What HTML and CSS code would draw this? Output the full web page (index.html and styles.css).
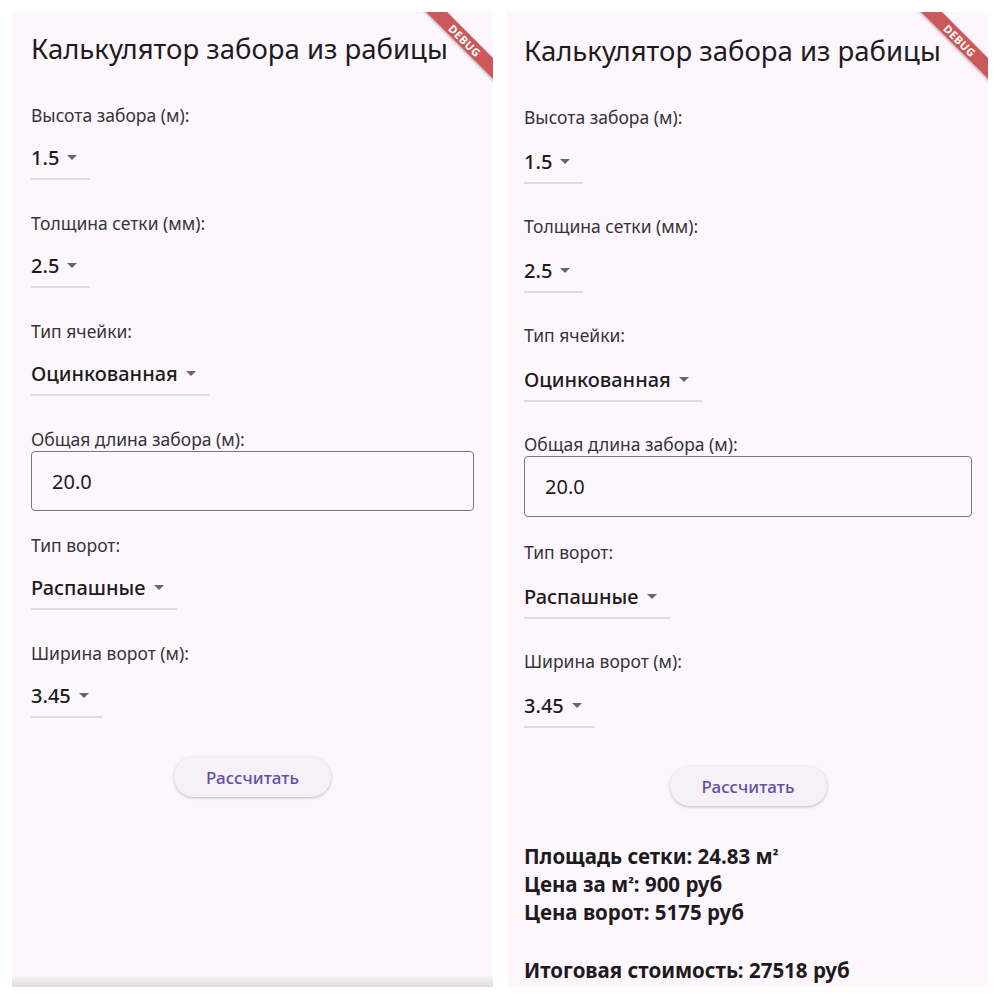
FILE: index.html
```html
<!DOCTYPE html>
<html lang="ru">
<head>
  <meta charset="UTF-8" />
  <title>Калькулятор забора из рабицы</title>
  <link rel="stylesheet" href="styles.css">
</head>
<body>

  <!-- before calculation -->
  <section class="screen">
    <div class="debug-banner">DEBUG</div>
    <header class="app-bar">Калькулятор забора из рабицы</header>
    <main class="content">
      <div class="field-group">
        <p class="field-label">Высота забора (м):</p>
        <div class="dropdown">
          <span class="dropdown-value">1.5</span>
          <svg class="dropdown-arrow" viewBox="0 0 24 24"><path d="M7 10l5 5 5-5z"/></svg>
        </div>
      </div>
      <div class="field-group">
        <p class="field-label">Толщина сетки (мм):</p>
        <div class="dropdown">
          <span class="dropdown-value">2.5</span>
          <svg class="dropdown-arrow" viewBox="0 0 24 24"><path d="M7 10l5 5 5-5z"/></svg>
        </div>
      </div>
      <div class="field-group">
        <p class="field-label">Тип ячейки:</p>
        <div class="dropdown">
          <span class="dropdown-value">Оцинкованная</span>
          <svg class="dropdown-arrow" viewBox="0 0 24 24"><path d="M7 10l5 5 5-5z"/></svg>
        </div>
      </div>
      <div class="field-group field-group--input">
        <p class="field-label">Общая длина забора (м):</p>
        <div class="text-input">20.0</div>
      </div>
      <div class="field-group">
        <p class="field-label">Тип ворот:</p>
        <div class="dropdown">
          <span class="dropdown-value">Распашные</span>
          <svg class="dropdown-arrow" viewBox="0 0 24 24"><path d="M7 10l5 5 5-5z"/></svg>
        </div>
      </div>
      <div class="field-group">
        <p class="field-label">Ширина ворот (м):</p>
        <div class="dropdown">
          <span class="dropdown-value">3.45</span>
          <svg class="dropdown-arrow" viewBox="0 0 24 24"><path d="M7 10l5 5 5-5z"/></svg>
        </div>
      </div>
      <div class="actions">
        <button class="calc-button">Рассчитать</button>
      </div>
    </main>
    <div class="nav-shade"></div>
  </section>

  <!-- after calculation -->
  <section class="screen screen--result">
    <div class="debug-banner">DEBUG</div>
    <header class="app-bar">Калькулятор забора из рабицы</header>
    <main class="content">
      <div class="field-group">
        <p class="field-label">Высота забора (м):</p>
        <div class="dropdown">
          <span class="dropdown-value">1.5</span>
          <svg class="dropdown-arrow" viewBox="0 0 24 24"><path d="M7 10l5 5 5-5z"/></svg>
        </div>
      </div>
      <div class="field-group">
        <p class="field-label">Толщина сетки (мм):</p>
        <div class="dropdown">
          <span class="dropdown-value">2.5</span>
          <svg class="dropdown-arrow" viewBox="0 0 24 24"><path d="M7 10l5 5 5-5z"/></svg>
        </div>
      </div>
      <div class="field-group">
        <p class="field-label">Тип ячейки:</p>
        <div class="dropdown">
          <span class="dropdown-value">Оцинкованная</span>
          <svg class="dropdown-arrow" viewBox="0 0 24 24"><path d="M7 10l5 5 5-5z"/></svg>
        </div>
      </div>
      <div class="field-group field-group--input">
        <p class="field-label">Общая длина забора (м):</p>
        <div class="text-input">20.0</div>
      </div>
      <div class="field-group">
        <p class="field-label">Тип ворот:</p>
        <div class="dropdown">
          <span class="dropdown-value">Распашные</span>
          <svg class="dropdown-arrow" viewBox="0 0 24 24"><path d="M7 10l5 5 5-5z"/></svg>
        </div>
      </div>
      <div class="field-group">
        <p class="field-label">Ширина ворот (м):</p>
        <div class="dropdown">
          <span class="dropdown-value">3.45</span>
          <svg class="dropdown-arrow" viewBox="0 0 24 24"><path d="M7 10l5 5 5-5z"/></svg>
        </div>
      </div>
      <div class="actions">
        <button class="calc-button">Рассчитать</button>
      </div>
      <div class="result">
        <p>Площадь сетки: 24.83 м<span class="sq">²</span></p>
        <p>Цена за м<span class="sq">²</span>: 900 руб</p>
        <p>Цена ворот: 5175 руб</p>
        <p class="result-total">Итоговая стоимость: 27518 руб</p>
      </div>
    </main>
  </section>

</body>
</html>
```

FILE: styles.css
```css
body {
  margin: 0;
  padding: 12px;
  background-color: #ffffff;
  font-family: 'Noto Sans', 'DejaVu Sans', sans-serif;
  color: #1d1b20;
  display: flex;
  gap: 14px;
}

.screen {
  position: relative;
  width: 481px;
  height: 975px;
  background-color: #fdf7fd;
  overflow: hidden;
}

.app-bar {
  height: 72px;
  padding: 0 19px;
  display: flex;
  align-items: center;
  font-size: 27.5px;
  color: #1d1b20;
}

.content {
  padding: 20px 19px 0;
}

.field-group {
  margin-bottom: 32px;
}

.field-label {
  margin: 0;
  font-size: 17.5px;
  line-height: 22px;
  color: #36333a;
}

.dropdown {
  display: inline-flex;
  align-items: center;
  height: 42px;
  margin-top: 10px;
  padding-right: 6px;
  border-bottom: 2px solid #dfdadf;
}

.dropdown-value {
  font-size: 20px;
  font-weight: 500;
  color: #1d1b20;
}

.dropdown-arrow {
  width: 24px;
  height: 24px;
  margin-left: 1px;
  fill: #69656c;
}

.field-group--input {
  margin-bottom: 23px;
}

.text-input {
  height: 58px;
  margin-top: 1px;
  padding: 0 20px;
  display: flex;
  align-items: center;
  border: 1px solid #79747e;
  border-radius: 4px;
  font-size: 20px;
  color: #1d1b20;
}

.actions {
  display: flex;
  justify-content: center;
  margin-top: 39px;
}

.calc-button {
  width: 157px;
  height: 40px;
  border: none;
  border-radius: 20px;
  background-color: #f6f1f8;
  box-shadow: 0 1px 3px rgba(0, 0, 0, 0.25);
  font-family: inherit;
  font-size: 17px;
  font-weight: 500;
  color: #6750a4;
}

.result {
  margin-top: 36px;
}

.result p {
  margin: 0;
  font-size: 20.5px;
  font-weight: bold;
  line-height: 28px;
  color: #1d1b20;
}

.result .sq {
  font-size: 15px;
  vertical-align: 2px;
}

.result .result-total {
  margin-top: 30px;
}

/* second screen is captured a touch larger */
.screen--result .app-bar {
  height: 76px;
  padding: 0 17px;
}

.screen--result .content {
  padding: 18px 16px 0 17px;
}

.screen--result .field-group {
  margin-bottom: 31px;
}

.screen--result .dropdown {
  margin-top: 12px;
}

.screen--result .field-group--input {
  margin-bottom: 24px;
}

.screen--result .text-input {
  height: 59px;
  margin-top: 1px;
}

.screen--result .actions {
  margin-top: 38px;
}

.debug-banner {
  position: absolute;
  top: 21px;
  right: -32px;
  width: 120px;
  height: 15px;
  transform: rotate(45deg);
  background-color: rgba(183, 28, 28, 0.72);
  box-shadow: 0 1px 3px rgba(0, 0, 0, 0.3);
  color: #ffffff;
  font-size: 11px;
  font-weight: bold;
  line-height: 15px;
  text-align: center;
  letter-spacing: 0.5px;
}

.nav-shade {
  position: absolute;
  left: 0;
  right: 0;
  bottom: 0;
  height: 12px;
  background: linear-gradient(to bottom, rgba(0, 0, 0, 0), rgba(0, 0, 0, 0.12));
}
```
